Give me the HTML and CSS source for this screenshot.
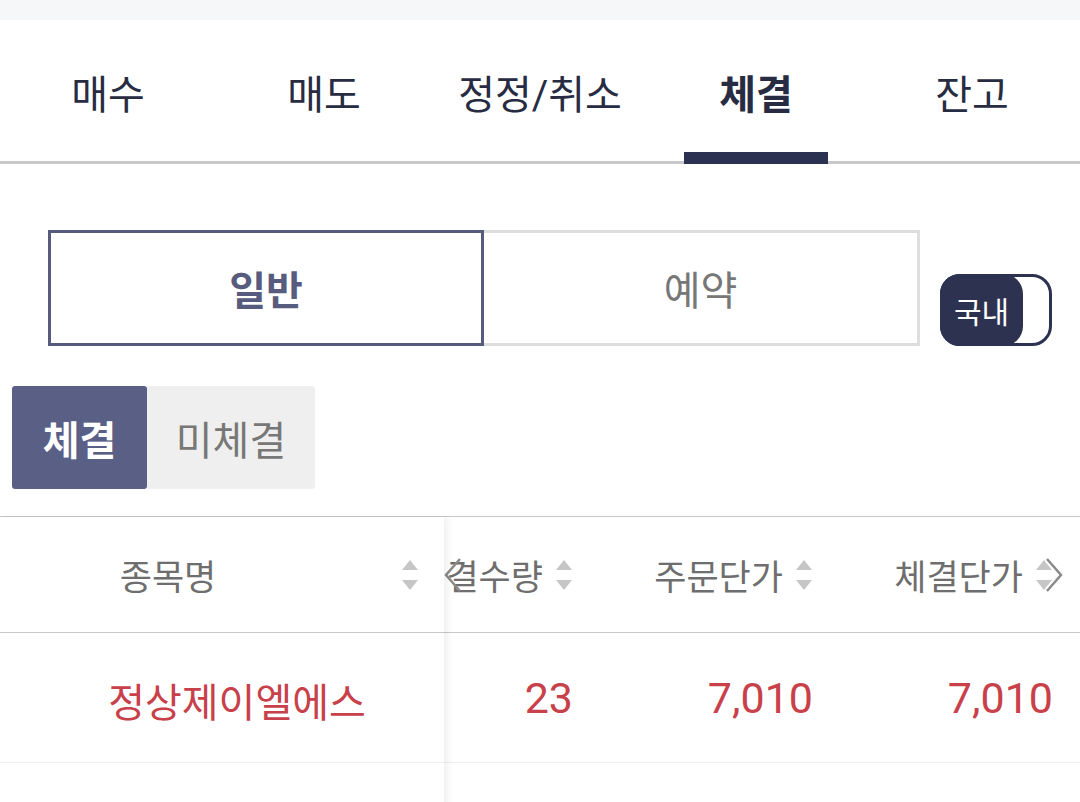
FILE: index.html
```html
<!DOCTYPE html>
<html lang="ko">
<head>
  <meta charset="UTF-8" />
  <title>체결</title>
  <link rel="stylesheet" href="styles.css">
</head>
<body>
  <div class="topband"></div>

  <nav class="tabs">
    <a class="tab"><span class="tab-label">매수</span><span class="tab-bar"></span></a>
    <a class="tab"><span class="tab-label">매도</span><span class="tab-bar"></span></a>
    <a class="tab"><span class="tab-label">정정/취소</span><span class="tab-bar"></span></a>
    <a class="tab active"><span class="tab-label">체결</span><span class="tab-bar"></span></a>
    <a class="tab"><span class="tab-label">잔고</span><span class="tab-bar"></span></a>
  </nav>

  <div class="seg-row">
    <div class="seg">
      <button class="seg-btn on">일반</button>
      <button class="seg-btn">예약</button>
    </div>
    <div class="toggle"><span class="toggle-knob">국내</span></div>
  </div>

  <div class="chips">
    <button class="chip on">체결</button>
    <button class="chip">미체결</button>
  </div>

  <div class="grid">
    <div class="col-fixed">
      <div class="th">
        <span class="th-name">종목명</span>
        <svg class="sort" width="18" height="30" viewBox="0 0 18 30"><polygon points="9,0 17,10 1,10"/><polygon points="1,20 17,20 9,30"/></svg>
      </div>
      <div class="td"><span class="name">정상제이엘에스</span></div>
      <div class="td"></div>
    </div>

    <div class="col-scroll">
      <div class="scroll-inner">
        <div class="col">
          <div class="th"><span>체결수량</span><svg class="sort" width="18" height="30" viewBox="0 0 18 30"><polygon points="9,0 17,10 1,10"/><polygon points="1,20 17,20 9,30"/></svg></div>
          <div class="td num">23</div>
          <div class="td"></div>
        </div>
        <div class="col">
          <div class="th"><span>주문단가</span><svg class="sort" width="18" height="30" viewBox="0 0 18 30"><polygon points="9,0 17,10 1,10"/><polygon points="1,20 17,20 9,30"/></svg></div>
          <div class="td num">7,010</div>
          <div class="td"></div>
        </div>
        <div class="col">
          <div class="th"><span>체결단가</span><svg class="sort" width="18" height="30" viewBox="0 0 18 30"><polygon points="9,0 17,10 1,10"/><polygon points="1,20 17,20 9,30"/></svg></div>
          <div class="td num">7,010</div>
          <div class="td"></div>
        </div>
        <div class="col">
          <div class="th"><span>주문수량</span><svg class="sort" width="18" height="30" viewBox="0 0 18 30"><polygon points="9,0 17,10 1,10"/><polygon points="1,20 17,20 9,30"/></svg></div>
          <div class="td num">23</div>
          <div class="td"></div>
        </div>
      </div>
      <svg class="arrow arrow-left" width="18" height="36" viewBox="0 0 18 36"><polyline points="16,2 2,18 16,34"/></svg>
      <svg class="arrow arrow-right" width="18" height="36" viewBox="0 0 18 36"><polyline points="2,2 16,18 2,34"/></svg>
    </div>
  </div>
</body>
</html>
```

FILE: styles.css
```css
body {
  margin: 0;
  width: 1080px;
  height: 802px;
  overflow: hidden;
  background: white;
  font-family: Roboto, "Noto Sans CJK KR", sans-serif;
  color: #272c42;
}
button {
  font-family: inherit;
  border: none;
  background: none;
  padding: 0;
  cursor: pointer;
}
.topband { height: 20px; background: #f6f7f9; }

/* tabs */
.tabs {
  display: grid;
  grid-template-columns: repeat(5, 1fr);
  height: 144px;
  background: linear-gradient(#c8c8c8, #c8c8c8) bottom / 100% 3px no-repeat;
}
.tab {
  display: flex;
  flex-direction: column;
  align-items: center;
}
.tab-label {
  flex: 1;
  padding-top: 48px;
  font-size: 40px;
  line-height: 56px;
  color: #272c42;
}
.tab-bar { width: 144px; height: 12px; }
.tab.active .tab-label { font-weight: bold; }
.tab.active .tab-bar { background: #2b3150; }

/* segmented */
.seg-row {
  display: flex;
  align-items: flex-end;
  padding: 66px 28px 0 48px;
}
.seg {
  display: grid;
  grid-template-columns: 1fr 1fr;
  width: 872px;
  height: 116px;
}
.seg-btn {
  border: 3px solid #dedede;
  border-left: none;
  font-size: 40px;
  color: #777;
  background: white;
}
.seg-btn.on {
  border: 3px solid #575c7e;
  color: #575c7e;
  font-weight: bold;
}
.toggle {
  margin-left: 20px;
  width: 112px;
  height: 72px;
  box-sizing: border-box;
  border: 3px solid #2d3250;
  border-radius: 20px;
  background: white;
  display: flex;
}
.toggle-knob {
  width: 83px;
  margin: -3px 0 -3px -3px;
  background: #2d3250;
  border-radius: 20px;
  color: white;
  font-size: 30px;
  display: flex;
  align-items: center;
  justify-content: center;
}

/* chips */
.chips {
  display: flex;
  margin: 40px 0 0 12px;
}
.chip {
  height: 103px;
  width: 168px;
  font-size: 40px;
  color: #777;
  background: #efefef;
  border-radius: 0 3px 3px 0;
}
.chip.on {
  width: 135px;
  background: #5a5f86;
  color: white;
  font-weight: bold;
  border-radius: 3px;
}

/* table */
.grid {
  display: flex;
  margin-top: 27px;
  border-top: 1px solid #c8c8c8;
}
.col-fixed {
  width: 444px;
  flex-shrink: 0;
  position: relative;
  z-index: 1;
  background: white;
  box-shadow: 4px 0 6px rgba(0,0,0,0.06);
}
.col-scroll {
  flex: 1;
  overflow: hidden;
  position: relative;
}
.scroll-inner {
  display: flex;
  margin-left: -96px;
}
.col { width: 240px; flex-shrink: 0; }
.th {
  height: 115px;
  border-bottom: 1px solid #c8c8c8;
  display: flex;
  align-items: center;
  justify-content: flex-end;
  padding-right: 15px;
  font-size: 35px;
  color: #6e6e6e;
}
.th .sort { margin-left: 12px; fill: #c6c6c6; }
.col-fixed .th { justify-content: flex-start; padding-right: 0; }
.th-name { width: 336px; text-align: center; }
.col-fixed .th .sort { margin-left: 65px; }
.td {
  height: 129px;
  border-bottom: 1px solid #efefef;
  display: flex;
  align-items: center;
  justify-content: flex-end;
  padding-right: 15px;
}
.col-fixed .td { justify-content: center; padding: 4px 0 0 30px; height: 125px; }
.name { font-size: 40px; color: #c8404a; }
.num { font-size: 43px; color: #c8404a; }

.arrow {
  position: absolute;
  top: 40px;
  fill: none;
  stroke: #8a8a8a;
  stroke-width: 2.5;
}
.arrow-left { left: 0; }
.arrow-right { right: 17px; }
```
